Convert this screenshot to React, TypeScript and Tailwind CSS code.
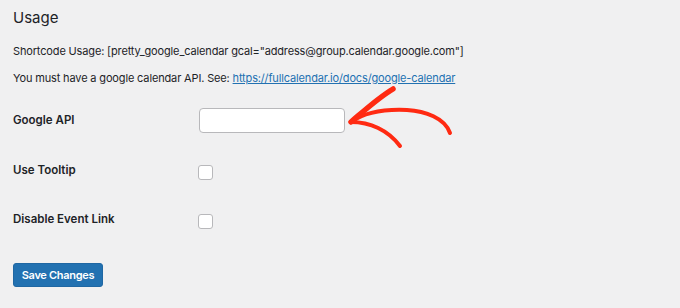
import React from "react";

export default function App() {
  return (
    <div
      className="relative w-[680px] h-[308px] bg-[#f0f0f1] text-[#1d2327] pl-[13px] overflow-hidden"
      style={{ fontFamily: 'Inter, "Liberation Sans", Arial, sans-serif' }}
    >
      <h2 className="text-[15px] leading-[20px] font-normal pt-[8px]">Usage</h2>
      <p className="text-[11px] leading-[16px] mt-[15px] tracking-[-0.15px]">
        Shortcode Usage: [pretty_google_calendar gcal="address@group.calendar.google.com"]
      </p>
      <p className="text-[11px] leading-[16px] mt-[11px] tracking-[-0.15px]">
        You must have a google calendar API. See:{" "}
        <a className="text-[#2271b1] underline" href="#">
          https://fullcalendar.io/docs/google-calendar
        </a>
      </p>
      <div className="mt-[22px] flex flex-col">
        <div className="flex items-center h-[25px]">
          <div className="w-[186px] text-[11.5px] font-semibold">Google API</div>
          <div className="w-[146px] h-[25px] bg-white border border-[#b8b8bb] rounded-[4px]" />
        </div>
        <div className="flex items-center h-[16px] mt-[31px]">
          <div className="w-[185px] text-[11.5px] font-semibold -mt-[2px]">Use Tooltip</div>
          <div className="w-[15px] h-[15px] bg-white border border-[#b8b8bb] rounded-[3px]" />
        </div>
        <div className="flex items-center h-[16px] mt-[33px]">
          <div className="w-[185px] text-[11.5px] font-semibold -mt-[2px]">Disable Event Link</div>
          <div className="w-[15px] h-[15px] bg-white border border-[#b8b8bb] rounded-[3px]" />
        </div>
        <div className="mt-[32px]">
          <button className="w-[90px] h-[24px] bg-[#2271b1] border border-[#1f67a3] rounded-[3px] text-white text-[11px] font-semibold tracking-[-0.3px]">
            Save Changes
          </button>
        </div>
      </div>
      <svg
        className="absolute left-0 top-0 pointer-events-none"
        width="680"
        height="308"
        viewBox="0 0 680 308"
        fill="none"
      >
        <path
          d="M351 122 C 365 110, 378 98, 393 89"
          stroke="#ff2a12"
          strokeWidth="5.5"
          strokeLinecap="round"
        />
        <path
          d="M351 122 C 365 112, 385 109, 407 110 C 425 111, 445 118, 450 133"
          stroke="#ff2a12"
          strokeWidth="4"
          strokeLinecap="round"
        />
        <path
          d="M351 122 C 370 122, 388 130, 400 146"
          stroke="#ff2a12"
          strokeWidth="4"
          strokeLinecap="round"
        />
      </svg>
    </div>
  );
}
